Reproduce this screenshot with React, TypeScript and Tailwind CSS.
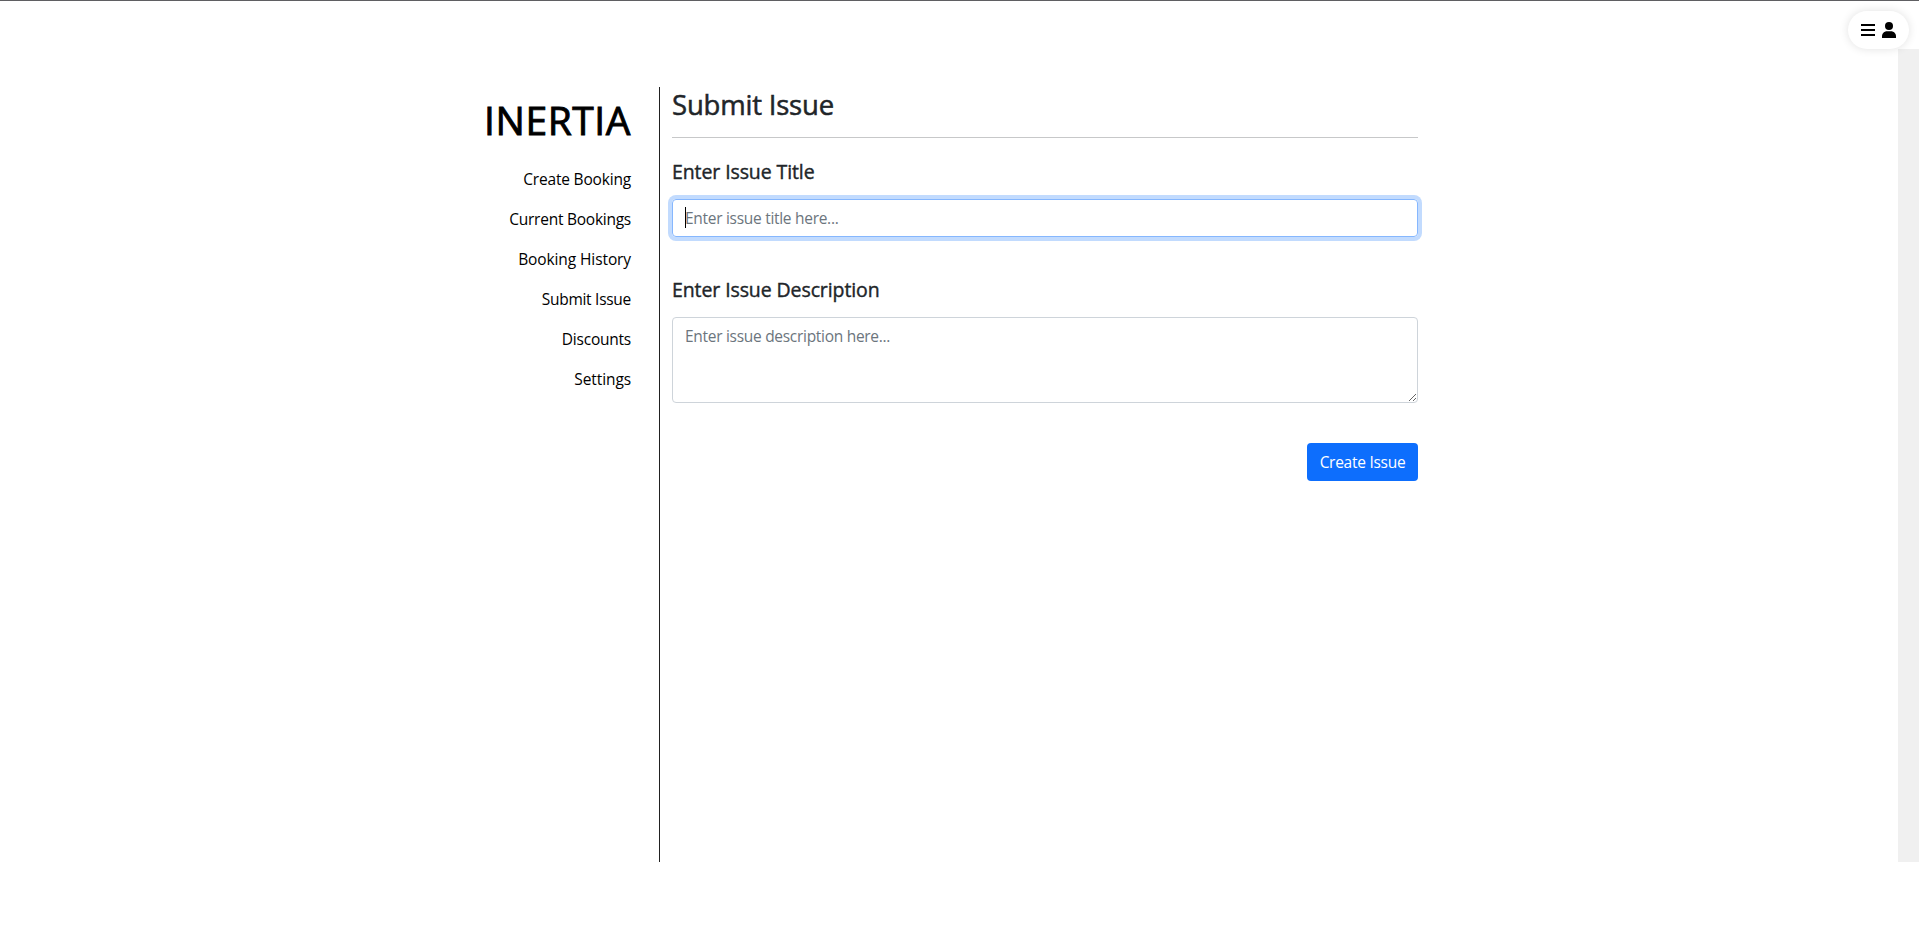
const links = [
  { label: "Create Booking", tracking: "tracking-[-0.18px]" },
  { label: "Current Bookings", tracking: "tracking-[-0.25px]" },
  { label: "Booking History", tracking: "tracking-[-0.1px]" },
  { label: "Submit Issue", tracking: "tracking-[-0.28px]" },
  { label: "Discounts", tracking: "tracking-[-0.23px]" },
  { label: "Settings", tracking: "tracking-[-0.1px]" },
];

function BarsIcon() {
  return (
    <svg viewBox="0 0 14 16" className="h-4 w-3.5" fill="currentColor" aria-hidden="true">
      <path d="M0 2h14v2H0zM0 7h14v2H0zM0 12h14v2H0z" />
    </svg>
  );
}

function UserIcon() {
  return (
    <svg viewBox="0 0 14 16" className="h-4 w-3.5" fill="currentColor" aria-hidden="true">
      <circle cx="7" cy="4" r="4" />
      <path d="M5 9.3h4c2.8 0 5 2.2 5 5V16H0v-1.7c0-2.8 2.2-5 5-5z" />
    </svg>
  );
}

function AccountMenu() {
  return (
    <button
      type="button"
      aria-label="Account menu"
      className="absolute top-[10px] right-[10px] flex h-[38px] w-[61px] items-center gap-[7px] rounded-full bg-white pl-[13px] text-black shadow-[0_0_10px_rgba(0,0,0,0.12)]"
    >
      <BarsIcon />
      <UserIcon />
    </button>
  );
}

function Sidebar() {
  return (
    <nav className="flex w-[172px] flex-col items-end pt-[9px] text-black">
      <h1 className="text-[39px] leading-[48px] font-medium tracking-[0.55px] [-webkit-text-stroke:0.9px_black]">
        INERTIA
      </h1>
      <ul className="mt-[15px]">
        {links.map((link) => (
          <li key={link.label} className={`py-2 text-right text-[15.5px] leading-6 ${link.tracking}`}>
            <a href="#">{link.label}</a>
          </li>
        ))}
      </ul>
    </nav>
  );
}

function IssueForm() {
  return (
    <form className="flex w-[746px] flex-col">
      <h2 className="pt-px text-[27.5px] leading-[34px] font-medium tracking-[-0.2px] [-webkit-text-stroke:0.5px_#212529]">
        Submit Issue
      </h2>
      <hr className="mt-[15px] border-[#c7c8c9]" />
      <label
        htmlFor="title"
        className="mt-[22px] text-[19.5px] leading-6 font-medium tracking-[-0.1px] [-webkit-text-stroke:0.4px_#212529]"
      >
        Enter Issue Title
      </label>
      <div className="relative mt-[15px]">
        <input
          id="title"
          placeholder="Enter issue title here..."
          className="block h-[38px] w-full rounded border border-[#86b7fe] px-3 text-[15.5px] tracking-[-0.29px] shadow-[0_0_0_4px_#c2dbfe] outline-none placeholder:text-[#6c757d]"
        />
        <span className="absolute top-2 left-[13px] h-[21px] w-px bg-black" />
      </div>
      <label
        htmlFor="description"
        className="mt-[41px] text-[19.5px] leading-6 font-medium tracking-[-0.1px] [-webkit-text-stroke:0.4px_#212529]"
      >
        Enter Issue Description
      </label>
      <textarea
        id="description"
        placeholder="Enter issue description here..."
        className="mt-[15px] h-[86px] resize-y rounded border border-[#ced4da] px-3 py-1.5 text-[15.5px] leading-6 tracking-[-0.29px] outline-none placeholder:text-[#6c757d]"
      />
      <button
        type="button"
        className="mt-10 h-[38px] w-[111px] self-end rounded bg-[#0d6efd] pt-px text-[15.5px] tracking-[-0.27px] text-white"
      >
        Create Issue
      </button>
    </form>
  );
}

export default function App() {
  return (
    <div className="relative flex h-[938px] flex-col overflow-hidden border-t border-[#5f5f62] bg-white font-['Open_Sans',sans-serif] text-[#212529]">
      <div className="flex h-[861px] items-stretch justify-between">
        <main className="flex pt-[86px] pl-[459px]">
          <Sidebar />
          <div className="ml-[28px] w-px bg-[#212121]" />
          <div className="ml-3">
            <IssueForm />
          </div>
        </main>
        <aside className="mt-12 w-[21px] bg-[#f0f0f0]" />
      </div>
      <AccountMenu />
    </div>
  );
}
